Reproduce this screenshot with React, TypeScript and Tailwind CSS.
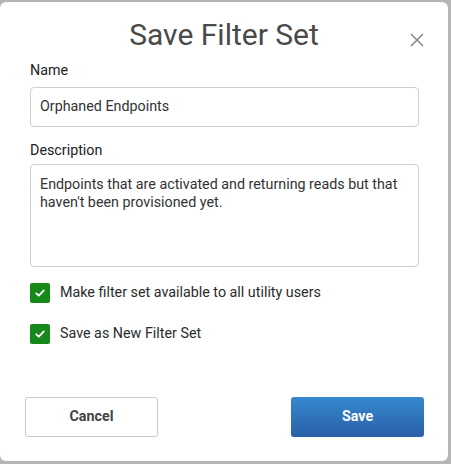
import React from "react";

function CheckRow({ label }: { label: string }) {
  return (
    <label className="flex items-center gap-[10px]">
      <span className="flex h-[20px] w-[20px] items-center justify-center rounded-[2px] bg-[#16891a]">
        <svg width="12" height="12" viewBox="0 0 12 12" fill="none">
          <path d="M2.2 6.3 L4.8 8.7 L9.8 3.4" stroke="#fff" strokeWidth="1.8" strokeLinecap="round" strokeLinejoin="round" />
        </svg>
      </span>
      <span className="text-[14.3px] text-[#2b2b2b]">{label}</span>
    </label>
  );
}

export default function App() {
  return (
    <div className="h-[464px] w-[451px] bg-[#b5b5b5] pt-[2px] pr-[3px] pb-[3px]" style={{ fontFamily: "Roboto, 'Liberation Sans', sans-serif" }}>
      <div className="relative flex h-full flex-col rounded-[6px] bg-white">
        <h1 className="pt-[16px] text-center text-[30px] leading-[34px] text-[#4a4a4a]">Save Filter Set</h1>
        <button className="absolute right-[24px] top-[31px] text-[#8a8a8a]">
          <svg width="14" height="14" viewBox="0 0 14 14">
            <path d="M1 1 L13 13 M13 1 L1 13" stroke="currentColor" strokeWidth="1.6" />
          </svg>
        </button>

        <div className="flex flex-col px-[30px] pr-[29px]">
          <div className="mt-[9px] text-[14.3px] leading-[18px] text-[#222]">Name</div>
          <div className="mt-[8px] flex h-[40px] items-center rounded-[4px] border border-[#cfcfcf] px-[9px] text-[14.3px] text-[#333]">
            Orphaned Endpoints
          </div>

          <div className="mt-[14px] text-[14.3px] leading-[18px] text-[#222]">Description</div>
          <div className="mt-[5px] h-[103px] rounded-[4px] border border-[#cfcfcf] px-[9px] pt-[10px] text-[14.3px] leading-[18px] text-[#333]">
            Endpoints that are activated and returning reads but that haven't been provisioned yet.
          </div>

          <div className="mt-[15px] flex flex-col gap-[20px]">
            <CheckRow label="Make filter set available to all utility users" />
            <CheckRow label="Save as New Filter Set" />
          </div>
        </div>

        <div className="mt-auto flex justify-between pb-[24px] pl-[25px] pr-[24px]">
          <button className="h-[40px] w-[133px] rounded-[3px] border border-[#c9c9c9] bg-white text-[14.3px] font-bold text-[#444]">
            Cancel
          </button>
          <button className="h-[40px] w-[133px] rounded-[3px] bg-gradient-to-b from-[#3589cd] to-[#2a5fa9] text-[14.3px] font-bold text-white">
            Save
          </button>
        </div>
      </div>
    </div>
  );
}
